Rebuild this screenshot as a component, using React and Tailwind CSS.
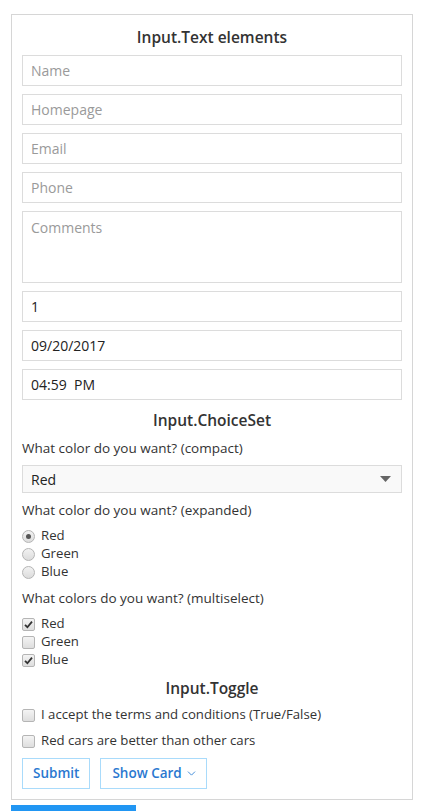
import React from "react";
import { ChevronDown } from "lucide-react";

const TEXT_INPUTS = ["Name", "Homepage", "Email", "Phone"];
const VALUE_INPUTS = ["1", "09/20/2017", "04:59  PM"];

function Radio({ checked, label }) {
  return (
    <div className="flex items-center h-[18px]">
      <span className="w-[13px] h-[13px] rounded-full border border-[#b5b5b5] bg-gradient-to-b from-[#f2f2f2] to-[#dcdcdc] flex items-center justify-center">
        {checked && <span className="w-[5px] h-[5px] rounded-full bg-[#555]" />}
      </span>
      <span className="ml-[6px] text-[13.2px] text-[#333]">{label}</span>
    </div>
  );
}

function Check({ checked, label, className = "" }) {
  return (
    <div className={`flex items-center h-[18px] ${className}`}>
      <span className="w-[13px] h-[13px] rounded-[2px] border border-[#b5b5b5] bg-gradient-to-b from-[#f4f4f4] to-[#dedede] flex items-center justify-center">
        {checked && (
          <svg width="9" height="9" viewBox="0 0 9 9">
            <path d="M1 4.8 L3.4 7.2 L8 1.6" stroke="#333" strokeWidth="1.8" fill="none" />
          </svg>
        )}
      </span>
      <span className="ml-[6px] text-[13.2px] text-[#333]">{label}</span>
    </div>
  );
}

export default function App() {
  return (
    <div className="w-[437px] h-[811px] bg-white overflow-hidden text-[#333]" style={{ fontFamily: "'Open Sans', 'Noto Sans', sans-serif" }}>
      <div className="ml-[11px] mt-[14px] w-[402px] h-[786px] border border-[#d6d6d6] px-[10px] flex flex-col">
        {/* Input.Text */}
        <h2 className="text-[15.5px] font-semibold text-center mt-[10px] leading-[24px] text-[#333]">Input.Text elements</h2>
        <div className="flex flex-col gap-[8px] mt-[6px]">
          {TEXT_INPUTS.map((p) => (
            <div key={p} className="h-[31px] border border-[#dcdcdc] flex items-center px-[8px] text-[14px] text-[#9a9a9a]">{p}</div>
          ))}
          <div className="h-[72px] border border-[#dcdcdc] px-[8px] pt-[5px] text-[14px] text-[#9a9a9a]">Comments</div>
          {VALUE_INPUTS.map((v) => (
            <div key={v} className="h-[31px] border border-[#dcdcdc] flex items-center px-[8px] text-[14px] text-[#222] whitespace-pre">{v}</div>
          ))}
        </div>

        {/* Input.ChoiceSet */}
        <h2 className="text-[15.5px] font-semibold text-center mt-[8px] leading-[24px]">Input.ChoiceSet</h2>
        <div className="text-[13.5px] leading-[20px] mt-[6px]">What color do you want? (compact)</div>
        <div className="h-[28px] mt-[7px] border border-[#dcdcdc] bg-[#f9f9f9] flex items-center justify-between px-[8px] text-[14px] text-[#222]">
          <span>Red</span>
          <svg width="11" height="6" viewBox="0 0 11 6" className="mr-[2px]"><path d="M0 0 H11 L5.5 6 Z" fill="#666" /></svg>
        </div>
        <div className="text-[13.5px] leading-[20px] mt-[7px]">What color do you want? (expanded)</div>
        <div className="flex flex-col mt-[7px]">
          <Radio checked label="Red" />
          <Radio label="Green" />
          <Radio label="Blue" />
        </div>
        <div className="text-[13.5px] leading-[20px] mt-[7px]">What colors do you want? (multiselect)</div>
        <div className="flex flex-col mt-[7px]">
          <Check checked label="Red" />
          <Check label="Green" />
          <Check checked label="Blue" />
        </div>

        {/* Input.Toggle */}
        <h2 className="text-[15.5px] font-semibold text-center mt-[7px] leading-[24px]">Input.Toggle</h2>
        <Check className="mt-[6px]" label="I accept the terms and conditions (True/False)" />
        <Check className="mt-[8px]" label="Red cars are better than other cars" />

        <div className="flex gap-[10px] mt-[8px]">
          <button className="h-[31px] px-[10px] border border-[#a9dbfb] text-[#2a78d0] text-[13.5px] font-semibold">Submit</button>
          <button className="h-[31px] pl-[11px] pr-[8px] border border-[#a9dbfb] text-[#2a78d0] text-[13.5px] font-semibold flex items-center gap-[3px]">
            Show Card
            <ChevronDown size={13} strokeWidth={1.75} className="text-[#3d8ad8]" />
          </button>
        </div>
      </div>
      <div className="ml-[11px] mt-[5px] w-[125px] h-[10px] bg-[#2196f3]" />
    </div>
  );
}
